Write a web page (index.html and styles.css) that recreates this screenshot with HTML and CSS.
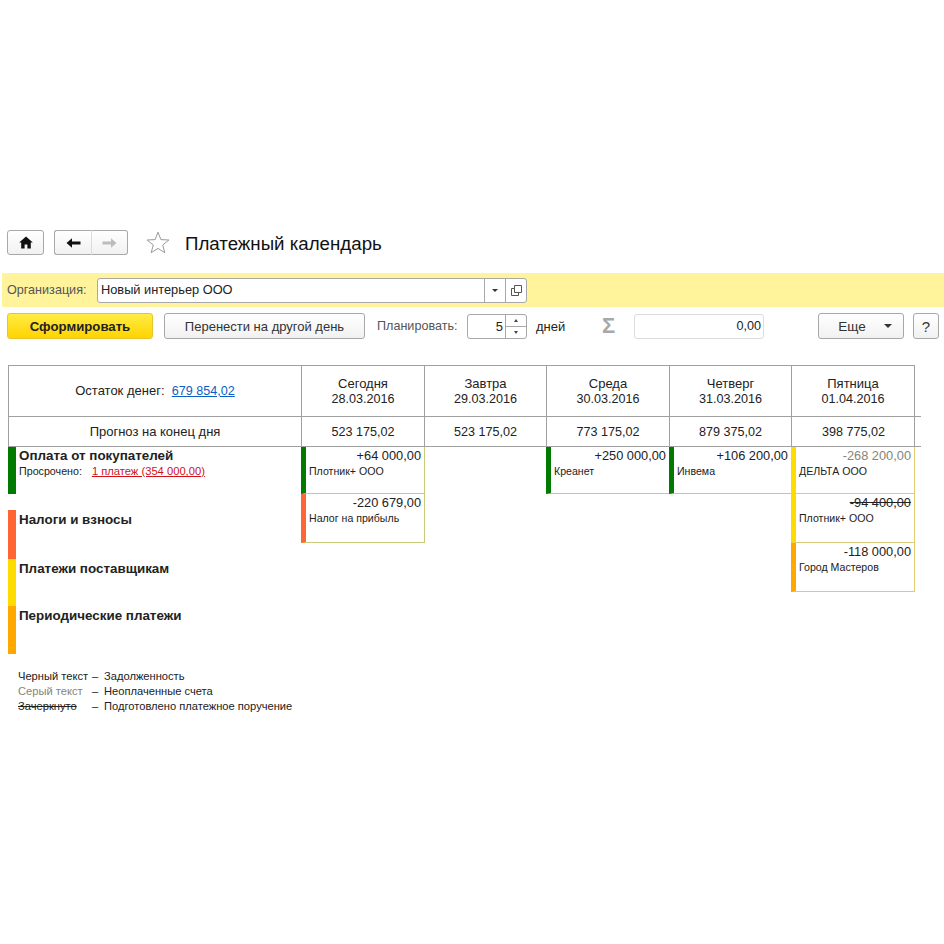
FILE: index.html
```html
<!DOCTYPE html>
<html lang="ru">
<head>
    <meta charset="UTF-8">
    <title>Платежный календарь</title>
    <link rel="stylesheet" href="styles.css">
</head>
<body>
    <div class="header">
        <button class="btn btn-home">
            <svg width="14" height="13" viewBox="0 0 14 13"><path d="M7 0.5 0.2 6.6H2.2V12.5H5.6V8.6H8.4V12.5H11.8V6.6H13.8Z" fill="#111"/></svg>
        </button>
        <div class="nav-group">
            <button class="btn nav-btn">
                <svg width="15" height="12" viewBox="0 0 15 12"><path d="M0.5 6 6 1.2V4.6H14.5V7.4H6V10.8Z" fill="#111"/></svg>
            </button>
            <button class="btn nav-btn">
                <svg width="15" height="12" viewBox="0 0 15 12"><path d="M14.5 6 9 1.2V4.6H0.5V7.4H9V10.8Z" fill="#bcbcbc"/></svg>
            </button>
        </div>
        <svg class="star" width="24" height="23" viewBox="0 0 24 23"><path d="M12 1.2 14.9 8.6 22.9 9 16.7 14 18.8 21.7 12 17.4 5.2 21.7 7.3 14 1.1 9 9.1 8.6Z" fill="#fff" stroke="#9a9a9a"/></svg>
        <h1>Платежный календарь</h1>
    </div>

    <div class="org-bar">
        <label>Организация:</label>
        <div class="org-input">
            <span class="org-value">Новый интерьер ООО</span>
            <span class="org-btn"><i class="caret"></i></span>
            <span class="org-btn org-open">
                <svg width="11" height="11" viewBox="0 0 11 11"><path d="M3.5 0.5H10.5V7.5H3.5Z M3.5 3.5H0.5V10.5H7.5V7.5" fill="none" stroke="#555"/></svg>
            </span>
        </div>
    </div>

    <div class="toolbar">
        <button class="btn btn-primary">Сформировать</button>
        <button class="btn btn-move">Перенести на другой день</button>
        <span class="plan-label">Планировать:</span>
        <div class="spinner">
            <span class="spinner-value">5</span>
            <span class="spinner-arrows"><i class="arrow-up"></i><i class="arrow-down"></i></span>
        </div>
        <span class="days-label">дней</span>
        <span class="sigma">Σ</span>
        <div class="sum-field">0,00</div>
        <button class="btn btn-more">Еще <i class="caret"></i></button>
        <button class="btn btn-help">?</button>
    </div>

    <div class="calendar">
        <div class="head-cell head-first"><span>Остаток денег:&nbsp; <a href="#" class="balance">679 854,02</a></span></div>
        <div class="head-cell"><span>Сегодня<br><span class="num">28.03.2016</span></span></div>
        <div class="head-cell"><span>Завтра<br><span class="num">29.03.2016</span></span></div>
        <div class="head-cell"><span>Среда<br><span class="num">30.03.2016</span></span></div>
        <div class="head-cell"><span>Четверг<br><span class="num">31.03.2016</span></span></div>
        <div class="head-cell"><span>Пятница<br><span class="num">01.04.2016</span></span></div>

        <div class="total-cell total-first">Прогноз на конец дня</div>
        <div class="total-cell num">523 175,02</div>
        <div class="total-cell num">523 175,02</div>
        <div class="total-cell num">773 175,02</div>
        <div class="total-cell num">879 375,02</div>
        <div class="total-cell num total-last">398 775,02</div>

        <div class="categories">
            <div class="category green first">
                <div class="category-name">Оплата от покупателей</div>
                <div class="overdue">Просрочено: <a href="#">1 платеж (354 000,00)</a></div>
            </div>
            <div class="category red"><div class="category-name">Налоги и взносы</div></div>
            <div class="category yellow"><div class="category-name">Платежи поставщикам</div></div>
            <div class="category orange"><div class="category-name">Периодические платежи</div></div>
        </div>

        <div class="day">
            <div class="pay green h47"><div class="amount">+64 000,00</div><div class="payee">Плотник+ ООО</div></div>
            <div class="pay red h49"><div class="amount">-220 679,00</div><div class="payee">Налог на прибыль</div></div>
        </div>
        <div class="day"></div>
        <div class="day">
            <div class="pay green h47"><div class="amount">+250 000,00</div><div class="payee">Креанет</div></div>
        </div>
        <div class="day">
            <div class="pay green h47"><div class="amount">+106 200,00</div><div class="payee">Инвема</div></div>
        </div>
        <div class="day">
            <div class="pay yellow h47"><div class="amount grey">-268 200,00</div><div class="payee">ДЕЛЬТА ООО</div></div>
            <div class="pay yellow h49"><div class="amount struck">-94 400,00</div><div class="payee">Плотник+ ООО</div></div>
            <div class="pay orange h49"><div class="amount">-118 000,00</div><div class="payee">Город Мастеров</div></div>
        </div>
    </div>

    <div class="legend">
        <span>Черный текст</span><span>–</span><span>Задолженность</span>
        <span class="grey">Серый текст</span><span>–</span><span>Неоплаченные счета</span>
        <span class="struck">Зачеркнуто</span><span>–</span><span>Подготовлено платежное поручение</span>
    </div>
</body>
</html>
```

FILE: styles.css
```css
* {
    box-sizing: border-box;
}
body {
    margin: 0;
    padding-top: 230px;
    background: white;
    color: #222;
    font-family: "Liberation Sans", Arial, sans-serif;
    font-size: 13px;
}
button {
    font-family: inherit;
}
.btn {
    display: flex;
    align-items: center;
    justify-content: center;
    height: 25px;
    padding: 0;
    color: #333;
    font-size: 13px;
    background: linear-gradient(#ffffff, #f1f1f1);
    border: 1px solid #a8a8a8;
    border-radius: 3px;
}
.num {
    font-size: 12.6px;
}

.header {
    display: flex;
    align-items: center;
    height: 25px;
    padding-left: 7px;
}
.btn-home {
    width: 37px;
}
.nav-group {
    display: flex;
    margin-left: 10px;
}
.nav-btn {
    width: 37px;
    border-right: none;
    border-radius: 3px 0 0 3px;
}
.nav-btn + .nav-btn {
    border-left: 1px solid #dcdcdc;
    border-right: 1px solid #a8a8a8;
    border-radius: 0 3px 3px 0;
}
.star {
    margin-left: 18px;
}
h1 {
    margin: 3px 0 0 15px;
    color: #111;
    font-size: 18.7px;
    font-weight: normal;
}

.org-bar {
    display: flex;
    align-items: center;
    height: 34px;
    margin: 18px 0 0 2px;
    padding-left: 5px;
    background: #fff39b;
}
.org-bar label {
    width: 90px;
    color: #555;
    font-size: 12.6px;
}
.org-input {
    display: flex;
    width: 430px;
    height: 25px;
    background: white;
    border: 1px solid #a8a8a8;
    border-radius: 3px;
}
.org-value {
    flex: 1;
    padding-left: 3px;
    font-size: 12.8px;
    line-height: 22px;
}
.org-btn {
    display: flex;
    align-items: center;
    justify-content: center;
    width: 21px;
    border-left: 1px solid #a8a8a8;
}
.caret {
    display: inline-block;
    border-top: 3px solid #333;
    border-left: 3px solid transparent;
    border-right: 3px solid transparent;
}

.toolbar {
    display: flex;
    align-items: center;
    height: 26px;
    margin-top: 6px;
    padding-left: 7px;
}
.toolbar .btn {
    height: 26px;
}
.btn-primary {
    width: 146px;
    font-size: 13.2px;
    font-weight: bold;
    color: #222;
    background: linear-gradient(#ffec45, #ffd400);
    border-color: #e8c530;
}
.btn-move {
    width: 201px;
    margin-left: 11px;
}
.plan-label {
    width: 90px;
    margin-left: 12px;
    color: #555;
    font-size: 12.6px;
}
.spinner {
    display: flex;
    width: 60px;
    height: 25px;
    margin-top: 1px;
    border: 1px solid #a8a8a8;
    border-radius: 3px;
}
.spinner-value {
    flex: 1;
    padding-right: 2px;
    line-height: 23px;
    text-align: right;
}
.spinner-arrows {
    display: flex;
    flex-direction: column;
    width: 21px;
    border-left: 1px solid #a8a8a8;
}
.spinner-arrows i {
    flex: 1;
    display: flex;
    align-items: center;
    justify-content: center;
}
.spinner-arrows i::after {
    content: "";
    border-left: 2px solid transparent;
    border-right: 2px solid transparent;
}
.arrow-up {
    border-bottom: 1px solid #a8a8a8;
}
.arrow-up::after {
    border-bottom: 3px solid #444;
}
.arrow-down::after {
    border-top: 3px solid #444;
}
.days-label {
    width: 66px;
    margin-left: 9px;
}
.sigma {
    width: 32px;
    color: #a8a8a8;
    font-size: 22px;
    font-weight: bold;
    line-height: 26px;
}
.sum-field {
    width: 130px;
    height: 25px;
    margin-top: 1px;
    padding-right: 2px;
    font-size: 12.6px;
    line-height: 23px;
    text-align: right;
    border: 1px solid #dcdcdc;
    border-radius: 3px;
}
.btn-more {
    gap: 18px;
    width: 86px;
    margin-left: 54px;
    padding-left: 8px;
    font-size: 13.5px;
}
.btn-more .caret {
    border-top-width: 4px;
    border-left-width: 4px;
    border-right-width: 4px;
}
.btn-help {
    width: 26px;
    margin-left: 9px;
    font-size: 15px;
}

.calendar {
    display: grid;
    grid-template-columns: 294px 123px 122px 123px 122px 123px;
    grid-template-rows: 51px 30px auto;
    width: 907px;
    margin: 26px 0 0 8px;
}
.head-cell, .total-cell {
    display: flex;
    align-items: center;
    justify-content: center;
    text-align: center;
    border-top: 1px solid #a0a0a0;
    border-right: 1px solid #a0a0a0;
}
.head-cell {
    line-height: 15px;
}
.total-cell {
    box-shadow: 0 1px 0 #a0a0a0;
}
.head-first, .total-first {
    border-left: 1px solid #a0a0a0;
}
.balance {
    color: #0a5fc4;
    font-size: 12.6px;
}
.total-last {
    width: 129px;
    padding-right: 6px;
    border-right: none;
    background: linear-gradient(#a0a0a0, #a0a0a0) 122px 0 / 1px 100% no-repeat;
}

.categories {
    display: flex;
    flex-direction: column;
    height: 208px;
    padding-top: 1px;
}
.category {
    height: 47px;
    padding-left: 3px;
    border-left: 8px solid;
}
.category.first {
    margin-bottom: 16px;
}
.category.red {
    height: 49px;
}
.category.orange {
    height: 48px;
}
.category-name {
    margin-top: 2px;
    color: #222;
    font-size: 13.4px;
    font-weight: bold;
    line-height: 16px;
}
.category.first .category-name {
    margin-top: 1px;
}
.overdue {
    font-size: 10.7px;
    line-height: 14px;
}
.overdue a {
    margin-left: 7px;
    color: #d0101a;
    font-size: 11.2px;
}

.day {
    display: flex;
    flex-direction: column;
    padding-top: 1px;
}
.pay {
    margin-left: -1px;
    border-left: 5px solid;
    border-right: 1px solid #c8cc78;
    border-bottom: 1px solid #c8cc78;
}
.pay.yellow, .pay.orange {
    border-right-color: #e2cd78;
    border-bottom-color: #d8cc78;
}
.h47 {
    height: 47px;
}
.h49 {
    height: 49px;
}
.amount {
    padding-right: 3px;
    font-size: 12.8px;
    line-height: 17px;
    text-align: right;
}
.payee {
    padding-left: 3px;
    font-size: 10.6px;
    line-height: 14px;
}
.green {
    border-left-color: #007a00;
}
.red {
    border-left-color: #ff6633;
}
.yellow {
    border-left-color: #ffdc00;
}
.orange {
    border-left-color: #ffa800;
}
.grey {
    color: #85857a;
}
.struck {
    text-decoration: line-through;
}

.legend {
    display: grid;
    grid-template-columns: 74px 12px auto;
    justify-content: start;
    margin: 15px 0 0 18px;
    font-size: 11.15px;
    line-height: 15px;
}
```
